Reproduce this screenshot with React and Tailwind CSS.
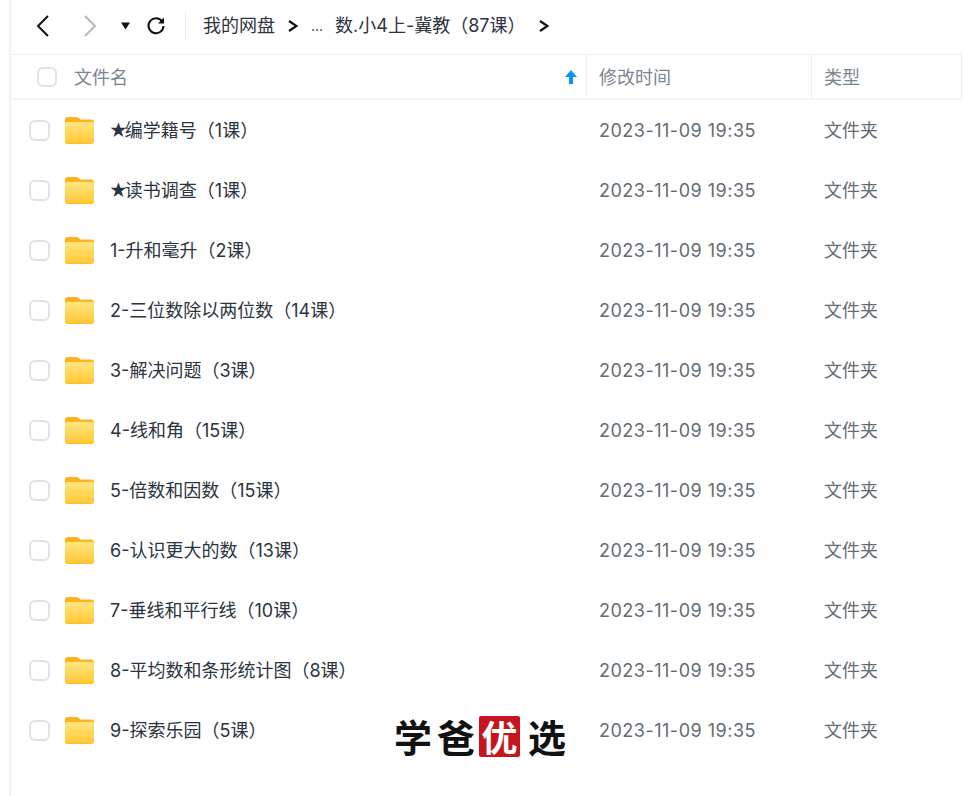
const rows = ["★编学籍号（1课）","★读书调查（1课）","1-升和毫升（2课）","2-三位数除以两位数（14课）","3-解决问题（3课）","4-线和角（15课）","5-倍数和因数（15课）","6-认识更大的数（13课）","7-垂线和平行线（10课）","8-平均数和条形统计图（8课）","9-探索乐园（5课）"];

const font = { fontFamily: 'Inter,"Noto Sans CJK SC",sans-serif' };

function Folder() {
  return (
    <svg width="29" height="27" viewBox="0 0 29 27" className="shrink-0">
      <defs>
        <linearGradient id="fg" x1="0" y1="0" x2="0" y2="1">
          <stop offset="0" stopColor="#ffe680" />
          <stop offset="1" stopColor="#ffc733" />
        </linearGradient>
      </defs>
      <path d="M0 3Q0 0 3 0H11Q13 0 14.500 1.500L15.500 2.500H26Q29 2.500 29 5.500V24Q29 27 26 27H3Q0 27 0 24Z" fill="#ffb21c" />
      <path d="M0 7Q0 5 2 5H27Q29 5 29 7V24Q29 26.500 26 26.500H3Q0 26.500 0 24Z" fill="url(#fg)" />
    </svg>
  );
}

function Chevron({ left, color = "#111", w = 2 }) {
  return (
    <svg width="16" height="24" viewBox="0 0 16 24">
      <path d={left ? "M13 2 L3 12 L13 22" : "M3 2 L13 12 L3 22"} fill="none" stroke={color} strokeWidth={w} />
    </svg>
  );
}

function Small() {
  return (
    <svg width="10" height="12" viewBox="0 0 10 12">
      <path d="M1 1 L8.500 6 L1 11" fill="none" stroke="#111" strokeWidth="2.200" />
    </svg>
  );
}

function RowName({ text }) {
  if (text[0] === "★") {
    return (
      <>
        <span className="ml-[-1px] tracking-[-3px]">★</span>
        {text.slice(1)}
      </>
    );
  }
  return text;
}

export default function App() {
  return (
    <div className="relative w-[963px] h-[796px] bg-white overflow-hidden" style={font}>
      <div className="ml-[9px] w-[953px] h-full border-l-2 border-[#f2f2f2]">
        <div className="flex items-center h-[55px] border-b border-[#efefef] pb-[3px]">
          <div className="ml-[24px]"><Chevron left /></div>
          <div className="ml-[31px]"><Chevron color="#b8b8b8" /></div>
          <svg width="9" height="8" viewBox="0 0 10 8" className="ml-[23px]"><path d="M0 0H10L5 8Z" fill="#111" /></svg>
          <svg width="20" height="20" viewBox="0 0 20 20" className="ml-[16px]">
            <path d="M16.500 6A7.500 7.500 0 1 0 17.500 10" fill="none" stroke="#111" strokeWidth="2" />
            <path d="M18 1.500V7.500H12Z" fill="#111" />
          </svg>
          <div className="ml-[19px] w-px h-[27px] bg-[#e8e8e8]" />
          <span className="ml-[17px] text-[18px] text-[#2c3440] whitespace-nowrap">我的网盘</span>
          <span className="ml-[13px] flex"><Small /></span>
          <span className="ml-[13px] text-[14px] text-[#2c3440]">...</span>
          <span className="ml-[12px] text-[18px] text-[#2c3440] whitespace-nowrap">数.小4上-冀教（87课）</span>
          <span className="ml-[13px] flex"><Small /></span>
        </div>
        <div className="flex h-[45px] border-b-2 border-[#f5f5f5] text-[18px] text-[#7b8591]">
          <div className="w-[576px] flex items-center border-r border-[#eeeeee]">
            <span className="ml-[26px] w-[20px] h-[20px] rounded-[6px] border-2 border-[#e2e2e2]" />
            <span className="ml-[17px] pt-[1px]">文件名</span>
            <svg width="12" height="14" viewBox="0 0 12 14" className="ml-auto mr-[9px]"><path d="M6 0L12 7H8V14H4V7H0Z" fill="#0a95f5" /></svg>
          </div>
          <div className="w-[225px] flex items-center pl-[12px] pt-[1px] border-r border-[#eeeeee]">修改时间</div>
          <div className="w-[150px] flex items-center pl-[12px] pt-[1px] border-r border-[#eeeeee]">类型</div>
        </div>
        {rows.map((r) => (
          <div key={r} className="flex items-center h-[60px]">
            <span className="ml-[18px] w-[21px] h-[21px] rounded-[6px] border-2 border-[#e2e2e2] shrink-0" />
            <span className="ml-[15px] flex"><Folder /></span>
            <span className="ml-[16px] w-[489px] text-[18px] text-[#2b3440] whitespace-nowrap"><RowName text={r} /></span>
            <span className="w-[225px] text-[18px] tracking-[0.5px] text-[#636b75] whitespace-nowrap">2023-11-09 19:35</span>
            <span className="text-[18px] text-[#636b75]">文件夹</span>
          </div>
        ))}
      </div>
      <div className="absolute left-[394px] top-[714px] flex items-center text-[38px] leading-[44px] font-bold text-[#111]" style={{ fontFamily: '"Noto Sans CJK SC",sans-serif' }}>
        <span className="w-[43px]">学</span>
        <span className="w-[43px]">爸</span>
        <span className="w-[41px] h-[41px] ml-[-1px] rounded-[2px] bg-[#c4161c] text-white text-[36px] leading-[41px] text-center">优</span>
        <span className="ml-[8px]">选</span>
      </div>
    </div>
  );
}
